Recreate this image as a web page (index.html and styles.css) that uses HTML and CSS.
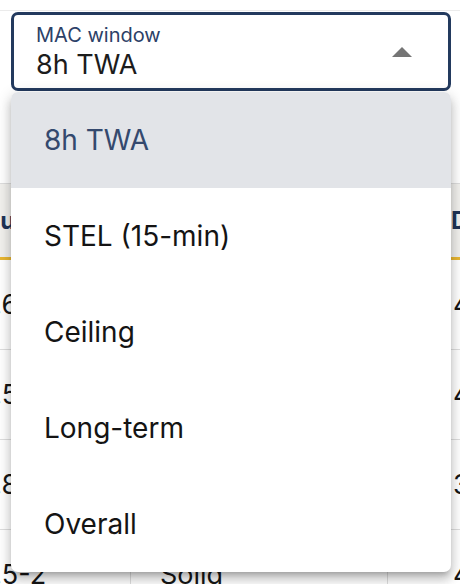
FILE: index.html
```html
<!DOCTYPE html>
<html lang="en">
<head>
<meta charset="utf-8">
<title>MAC window</title>
<link rel="stylesheet" href="styles.css">
</head>
<body>
<div class="page">
  <div class="topbar"></div>
  <div class="field">
    <div class="field-text">
      <span class="field-label">MAC window</span>
      <span class="field-value">8h TWA</span>
    </div>
    <svg class="arrow" width="20" height="10" viewBox="0 0 20 10" aria-hidden="true"><path d="M0 10 L10 0 L20 10 Z" fill="#757575"/></svg>
  </div>
  <div class="table-wrap">
    <table class="data">
      <thead>
        <tr>
          <th class="c1">Duration</th>
          <th class="c2">State</th>
          <th class="c3">Dose</th>
        </tr>
      </thead>
      <tbody>
        <tr><td class="c1">0.60</td><td class="c2">Liquid</td><td class="c3">40</td></tr>
        <tr><td class="c1">0.5-1</td><td class="c2">Gas</td><td class="c3">4.5</td></tr>
        <tr><td class="c1">0.8</td><td class="c2">Solid</td><td class="c3">3.2</td></tr>
        <tr><td class="c1">0.5-2</td><td class="c2">Solid</td><td class="c3">4.0</td></tr>
      </tbody>
    </table>
  </div>
  <ul class="menu">
    <li class="menu-item selected">8h TWA</li>
    <li class="menu-item">STEL (15-min)</li>
    <li class="menu-item">Ceiling</li>
    <li class="menu-item">Long-term</li>
    <li class="menu-item">Overall</li>
  </ul>
</div>
</body>
</html>
```

FILE: styles.css
```css
html, body {
  margin: 0;
  padding: 0;
  background: #ffffff;
}

body {
  font-family: "Inter", "Noto Sans", "Liberation Sans", sans-serif;
  color: #1a1a1a;
  width: 460px;
  height: 584px;
  overflow: hidden;
}

.page {
  position: relative;
  width: 460px;
  height: 584px;
  overflow: hidden;
}

.topbar {
  height: 10px;
  border-bottom: 1px solid #ebebeb;
}

.field {
  margin: 1px 9px 0 11px;
  height: 79px;
  box-sizing: border-box;
  border: 3px solid #233a5e;
  border-radius: 7px;
  padding: 0 36px 0 22px;
  display: flex;
  align-items: center;
  justify-content: space-between;
  background: #ffffff;
}

.field-text {
  display: flex;
  flex-direction: column;
  align-self: flex-start;
  padding-top: 8px;
}

.field-label {
  font-size: 20px;
  line-height: 24px;
  color: #2c4167;
}

.field-value {
  margin-top: 2px;
  font-size: 27px;
  line-height: 32px;
  color: #1c1c1c;
}

.arrow {
  display: block;
  flex: none;
}

.table-wrap {
  margin-top: 92px;
  overflow: hidden;
  width: 460px;
}

.data {
  margin-left: -52px;
  border-collapse: separate;
  border-spacing: 0;
  table-layout: fixed;
  width: 720px;
  font-size: 27px;
}

.data th,
.data td {
  box-sizing: border-box;
  text-align: left;
  white-space: nowrap;
  overflow: hidden;
  padding: 0;
}

.data th {
  background: #f1f0ed;
  border-top: 1px solid #dddddd;
  border-bottom: 3px solid #e8b632;
  line-height: 73px;
  font-size: 24px;
  font-weight: 700;
  color: #1f3457;
}

.data td {
  line-height: 89px;
  border-bottom: 1px solid #dedede;
  color: #161616;
}

.data .c1 {
  width: 183px;
  padding-left: 30px;
  border-right: 1px solid #dedede;
}

.data th.c1 {
  padding-left: 35px;
}

.data .c2 {
  width: 257px;
  padding-left: 29px;
  border-right: 1px solid #dedede;
}

.data .c3 {
  width: 280px;
  padding-left: 65px;
}

.data th.c3 {
  padding-left: 63px;
}

.menu {
  position: absolute;
  top: 92px;
  left: 11px;
  width: 440px;
  margin: 0;
  padding: 0;
  list-style: none;
  background: #ffffff;
  border-radius: 7px;
  overflow: hidden;
  box-shadow: 0 5px 5px -3px rgba(0, 0, 0, 0.2),
              0 8px 10px 1px rgba(0, 0, 0, 0.14),
              0 3px 14px 2px rgba(0, 0, 0, 0.12);
}

.menu-item {
  height: 96px;
  box-sizing: border-box;
  padding-left: 33px;
  display: flex;
  align-items: center;
  font-size: 28px;
  color: #141414;
}

.menu-item.selected {
  background: #e2e4e8;
  color: #34496e;
}
```
